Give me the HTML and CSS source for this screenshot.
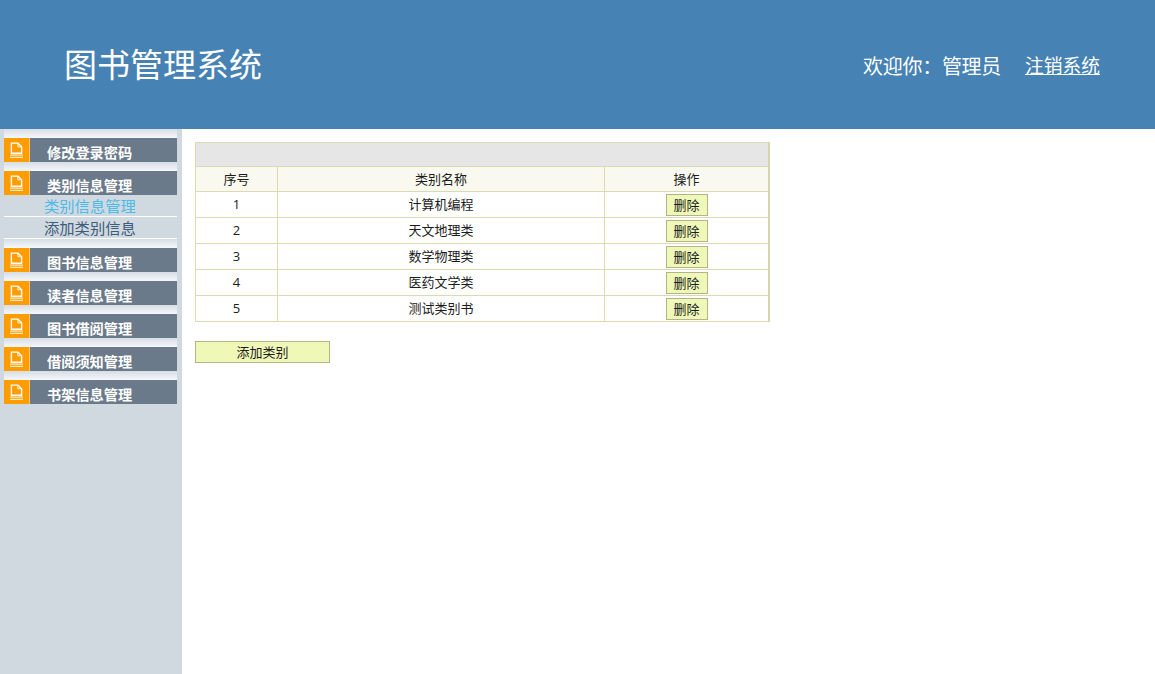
FILE: index.html
```html
<!DOCTYPE html>
<html lang="zh">
<head>
<meta charset="utf-8">
<title>图书管理系统</title>
<link rel="stylesheet" href="styles.css">
</head>
<body>
<header class="top">
  <h1 class="brand">图书管理系统</h1>
  <div class="user"><span class="welcome">欢迎你：管理员</span><a class="logout" href="#">注销系统</a></div>
</header>
<div class="main">
  <nav class="side">
    <div class="head"><span class="ico"><svg viewBox="0 0 14 18" class="doc"><path d="M1.5 1h7l4 4v7h-11z" fill="none" stroke="#fff" stroke-width="1.5"/><path d="M8.5 1v4h4" fill="none" stroke="#fff" stroke-width="1"/><path d="M0 14h14M0 16.500h14" stroke="#ffe9c0" stroke-width="1.300"/></svg></span><span class="lbl">修改登录密码</span></div>
    <div class="head"><span class="ico"><svg viewBox="0 0 14 18" class="doc"><path d="M1.5 1h7l4 4v7h-11z" fill="none" stroke="#fff" stroke-width="1.5"/><path d="M8.5 1v4h4" fill="none" stroke="#fff" stroke-width="1"/><path d="M0 14h14M0 16.500h14" stroke="#ffe9c0" stroke-width="1.300"/></svg></span><span class="lbl">类别信息管理</span></div>
    <ul class="sub">
      <li class="on">类别信息管理</li>
      <li>添加类别信息</li>
    </ul>
    <div class="head"><span class="ico"><svg viewBox="0 0 14 18" class="doc"><path d="M1.5 1h7l4 4v7h-11z" fill="none" stroke="#fff" stroke-width="1.5"/><path d="M8.5 1v4h4" fill="none" stroke="#fff" stroke-width="1"/><path d="M0 14h14M0 16.500h14" stroke="#ffe9c0" stroke-width="1.300"/></svg></span><span class="lbl">图书信息管理</span></div>
    <div class="head"><span class="ico"><svg viewBox="0 0 14 18" class="doc"><path d="M1.5 1h7l4 4v7h-11z" fill="none" stroke="#fff" stroke-width="1.5"/><path d="M8.5 1v4h4" fill="none" stroke="#fff" stroke-width="1"/><path d="M0 14h14M0 16.500h14" stroke="#ffe9c0" stroke-width="1.300"/></svg></span><span class="lbl">读者信息管理</span></div>
    <div class="head"><span class="ico"><svg viewBox="0 0 14 18" class="doc"><path d="M1.5 1h7l4 4v7h-11z" fill="none" stroke="#fff" stroke-width="1.5"/><path d="M8.5 1v4h4" fill="none" stroke="#fff" stroke-width="1"/><path d="M0 14h14M0 16.500h14" stroke="#ffe9c0" stroke-width="1.300"/></svg></span><span class="lbl">图书借阅管理</span></div>
    <div class="head"><span class="ico"><svg viewBox="0 0 14 18" class="doc"><path d="M1.5 1h7l4 4v7h-11z" fill="none" stroke="#fff" stroke-width="1.5"/><path d="M8.5 1v4h4" fill="none" stroke="#fff" stroke-width="1"/><path d="M0 14h14M0 16.500h14" stroke="#ffe9c0" stroke-width="1.300"/></svg></span><span class="lbl">借阅须知管理</span></div>
    <div class="head"><span class="ico"><svg viewBox="0 0 14 18" class="doc"><path d="M1.5 1h7l4 4v7h-11z" fill="none" stroke="#fff" stroke-width="1.5"/><path d="M8.5 1v4h4" fill="none" stroke="#fff" stroke-width="1"/><path d="M0 14h14M0 16.500h14" stroke="#ffe9c0" stroke-width="1.300"/></svg></span><span class="lbl">书架信息管理</span></div>
  </nav>
  <main class="content">
    <table class="grid">
      <colgroup><col class="c1"><col class="c2"><col class="c3"></colgroup>
      <tr class="title"><td colspan="3"></td></tr>
      <tr class="cols"><td>序号</td><td>类别名称</td><td>操作</td></tr>
      <tr><td>1</td><td>计算机编程</td><td><button class="btn">删除</button></td></tr>
      <tr><td>2</td><td>天文地理类</td><td><button class="btn">删除</button></td></tr>
      <tr><td>3</td><td>数学物理类</td><td><button class="btn">删除</button></td></tr>
      <tr><td>4</td><td>医药文学类</td><td><button class="btn">删除</button></td></tr>
      <tr><td>5</td><td>测试类别书</td><td><button class="btn">删除</button></td></tr>
    </table>
    <button class="btn add">添加类别</button>
  </main>
</div>
</body>
</html>
```
FILE: styles.css
```css
* { box-sizing: border-box; }
html, body { margin: 0; height: 100%; }
body {
  font-family: "Open Sans", "Noto Sans CJK SC", sans-serif;
  font-size: 13px;
  color: #1c1c1c;
  background: #fff;
  overflow: hidden;
}
.top {
  height: 129px;
  background: #4682b4;
  color: #fff;
  display: flex;
  align-items: center;
  justify-content: space-between;
  padding: 0 55px 0 64px;
}
.brand {
  margin: 0;
  font-size: 33px;
  font-weight: 400;
  line-height: 1;
}
.user {
  font-size: 20px;
  line-height: 1;
  display: flex;
  align-items: center;
  padding-top: 4px;
}
.welcome { margin-right: 24px; letter-spacing: -0.3px; }
.logout { color: #fff; text-decoration: underline; font-size: 18.750px; }
.main { display: flex; height: 545px; }
.side {
  width: 182px;
  flex: none;
  background: #d0d8e0;
  padding: 0 5px 0 4px;
}
.head {
  height: 33px;
  padding-top: 9px;
  display: flex;
  background: linear-gradient(#d5dde5 0, #f6f8fa 9px, #6a7a8a 9px);
}
.ico {
  width: 26px;
  height: 24px;
  background: #ff9c00;
  border-right: 1px solid #ffc266;
  display: flex;
  justify-content: center;
  align-items: center;
  flex: none;
}
.doc { width: 13px; height: 17px; display: block; }
.lbl {
  flex: 1;
  height: 24px;
  margin-left: 1px;
  background: #6a7a8a;
  color: #fff;
  font-family: "Noto Sans CJK SC", sans-serif;
  font-size: 14.200px;
  font-weight: 700;
  line-height: 28px;
  padding-left: 16px;
  overflow: hidden;
}
.sub { list-style: none; margin: 0; padding: 0; }
.sub li {
  height: 22px;
  line-height: 22px;
  font-size: 15.300px;
  color: #3e5c7c;
  padding-left: 40px;
  border-bottom: 1px solid #fff;
  white-space: nowrap;
}
.sub li.on { color: #4cbbe8; }
.content { flex: 1; padding: 13px 0 0 13px; }
.grid {
  width: 575px;
  height: 180px;
  border-collapse: collapse;
  table-layout: fixed;
  border: 1px solid #d6d6b0;
  border-right-width: 2px;
}
.c1 { width: 82px; }
.c2 { width: 327px; }
.grid td {
  border: 1px solid #dadab4;
  text-align: center;
  padding: 0 0 1px;
  height: 26px;
  line-height: 18px;
}
.title td { height: 24px; background: #e6e6e6; }
.cols td { height: 25px; background: #f9f9ef; }
.btn {
  display: inline-block;
  width: 42px;
  height: 22px;
  padding: 0;
  margin: 0;
  vertical-align: middle;
  background: #f0f8b8;
  border: 1px solid #b4b48c;
  color: #1c1c1c;
  font: inherit;
  line-height: 18px;
}
.grid .btn { margin-top: 1px; }
.add {
  display: block;
  width: 135px;
  margin-top: 19px;
}
```
